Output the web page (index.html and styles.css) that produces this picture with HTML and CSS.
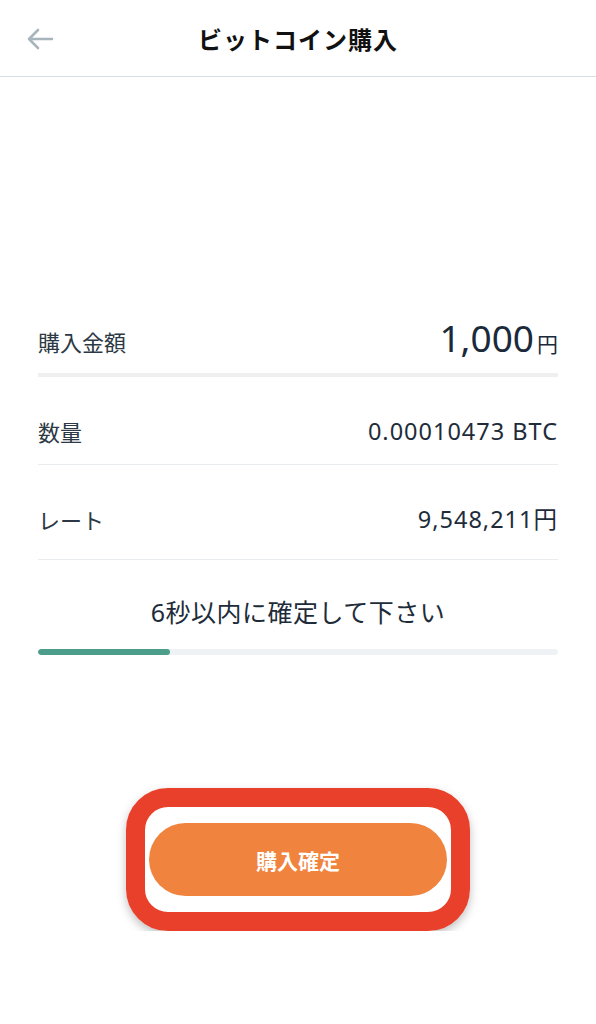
FILE: index.html
```html
<!DOCTYPE html>
<html lang="ja">

<head>
    <meta charset="UTF-8">
    <meta name="viewport" content="width=device-width, initial-scale=1.0">
    <title>ビットコイン購入</title>
    <link rel="stylesheet" href="styles.css">
</head>

<body>
    <header class="header">
        <div class="back">
            <svg width="28" height="24" viewBox="0 0 28 24">
                <path d="M26 12 H3 M12 3 L3 12 L12 21" fill="none" stroke="#a9b5bd" stroke-width="2.6" stroke-linecap="round" stroke-linejoin="round"/>
            </svg>
        </div>
        <h1 class="title">ビットコイン購入</h1>
        <div></div>
    </header>

    <main class="content">
        <div class="row row-amount">
            <span class="label">購入金額</span>
            <span class="amount">1,000<span class="yen">円</span></span>
        </div>
        <div class="row">
            <span class="label">数量</span>
            <span class="value">0.00010473 BTC</span>
        </div>
        <div class="row row-last">
            <span class="label">レート</span>
            <span class="value">9,548,211円</span>
        </div>

        <p class="timer">6秒以内に確定して下さい</p>
        <div class="progress">
            <div class="progress-fill" style="width: 25.4%"></div>
        </div>

        <div class="highlight">
            <button type="button" class="confirm">購入確定</button>
        </div>
    </main>
</body>

</html>
```

FILE: styles.css
```css
body {
    margin: 0;
    background: #fff;
    font-family: "Noto Sans", "Noto Sans CJK JP", sans-serif;
    color: #26323d;
}

.header {
    display: grid;
    grid-template-columns: 1fr auto 1fr;
    align-items: center;
    height: 76px;
    border-bottom: 1px solid #d6dee2;
}

.back {
    padding-left: 26px;
    padding-top: 1px;
    display: flex;
}

.title {
    margin: 0;
    font-family: "Noto Sans CJK JP", sans-serif;
    font-size: 24px;
    font-weight: 700;
    color: #111;
    letter-spacing: 1px;
}

.content {
    padding: 239px 38px 0;
}

.row {
    display: flex;
    justify-content: space-between;
    align-items: center;
    line-height: 32px;
    padding: 38px 0 17px;
    border-bottom: 1px solid #e9edef;
}

.row-amount {
    line-height: 44px;
    padding: 0 0 8px;
    border-bottom: 4px solid #efefef;
}

.row-last {
    padding-bottom: 24px;
}

.label {
    font-family: "Noto Sans CJK JP", sans-serif;
    font-size: 22px;
    color: #2c3844;
}

.amount {
    font-size: 37px;
    color: #1b2a3a;
}

.yen {
    font-family: "Noto Sans CJK JP", sans-serif;
    font-size: 21px;
    margin-left: 3px;
}

.value {
    font-size: 23.5px;
    letter-spacing: 1px;
    color: #1e2c3a;
}

.timer {
    margin: 36px 0 0;
    text-align: center;
    font-size: 25px;
    letter-spacing: 0.5px;
    line-height: 32px;
    color: #1e2c3a;
}

.progress {
    margin-top: 21px;
    height: 6px;
    border-radius: 3px;
    background: #eef2f4;
    overflow: hidden;
}

.progress-fill {
    height: 100%;
    border-radius: 3px;
    background: #4d9d8b;
}

.highlight {
    width: 302px;
    margin: 133px auto 0;
    padding: 16px 2px;
    border: 19px solid #e8402a;
    border-radius: 42px;
    box-shadow: 0 4px 10px rgba(0, 0, 0, 0.25);
    box-sizing: content-box;
    display: flex;
    justify-content: center;
}

.confirm {
    width: 298px;
    height: 73px;
    border: none;
    border-radius: 37px;
    background: #f0843f;
    color: #fff;
    font-family: "Noto Sans CJK JP", sans-serif;
    font-size: 21px;
    font-weight: 700;
    cursor: pointer;
}
```
